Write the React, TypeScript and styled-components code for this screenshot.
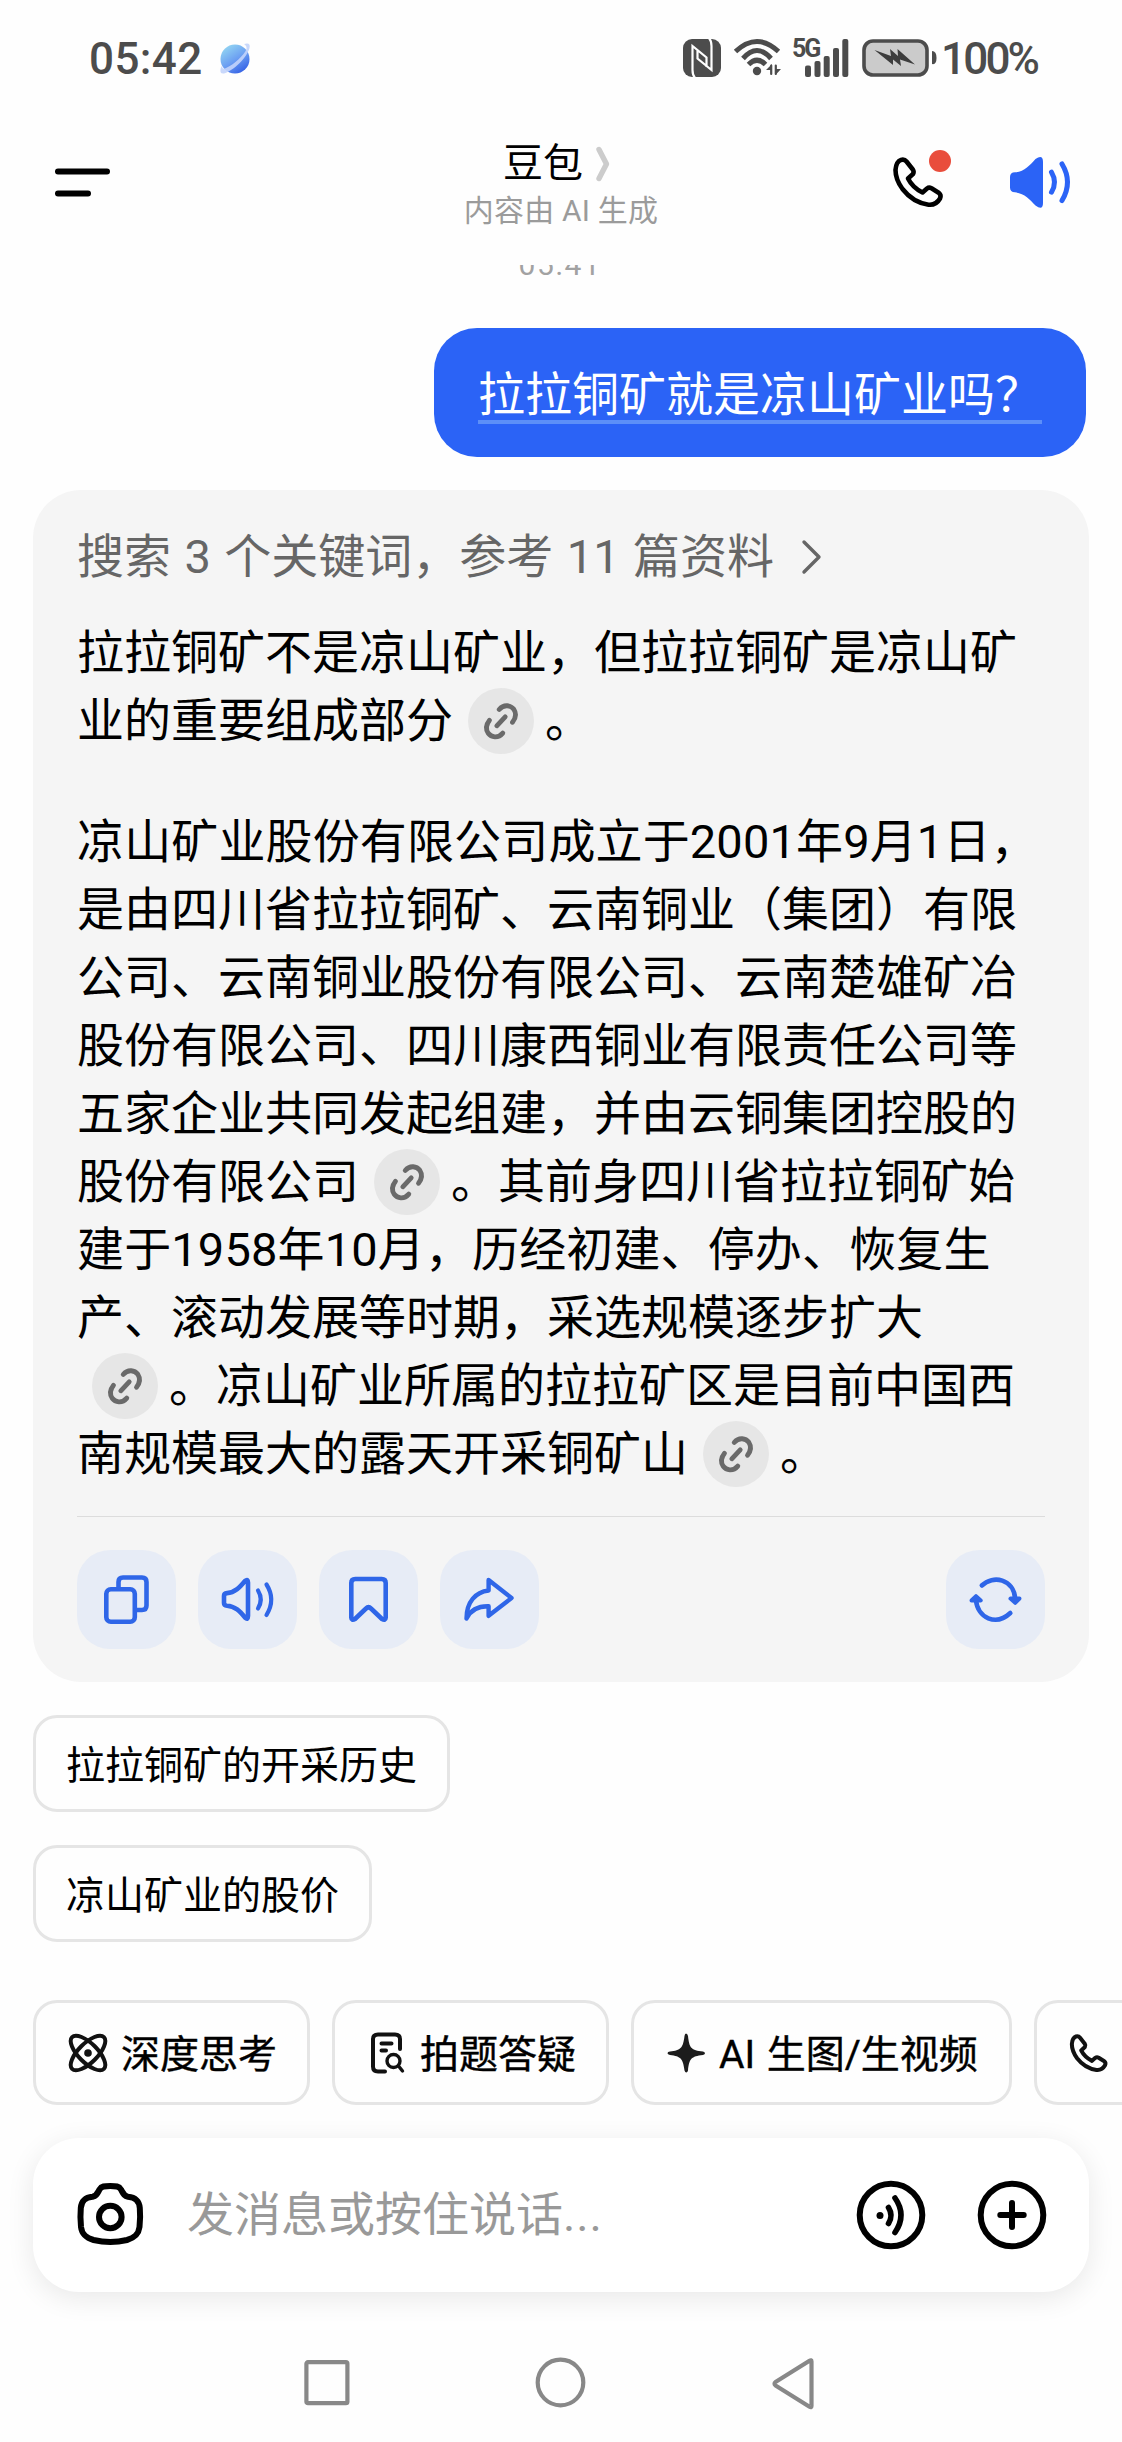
import React from "react";
import styled, { createGlobalStyle } from "styled-components";

const BLUE = "#2b63f6";
const ICON_BLUE = "#2f66e8";
const STATUS = "#4c4c4c";

const GlobalStyle = createGlobalStyle`
  * { box-sizing: border-box; }
  body {
    margin: 0;
    background: #fefefe;
    font-family: Roboto, "Noto Sans CJK SC", sans-serif;
    color: #000;
  }
  svg { display: block; overflow: visible; flex: none; }
`;

const Screen = styled.div`
  width: 1122px;
  height: 2442px;
  overflow: hidden;
  display: flex;
  flex-direction: column;
  background: #fefefe;
`;

const StatusBar = styled.header`
  height: 116px;
  padding: 0 84px 0 89px;
  display: flex;
  align-items: center;
  justify-content: space-between;
  color: ${STATUS};
`;

const StatusGroup = styled.div<{ $gap: number }>`
  display: flex;
  align-items: center;
  gap: ${(p) => p.$gap}px;
`;

const Clock = styled.span`
  padding-top: 1px;
  font-size: 44px;
  line-height: 52px;
  font-weight: 500;
  letter-spacing: 0.4px;
`;

const BatteryText = styled.span`
  display: block;
  width: 97px;
  padding-top: 1px;
  font-size: 44px;
  line-height: 52px;
  font-weight: 500;
  letter-spacing: -2.8px;
  white-space: nowrap;
  margin-left: 3px;
`;

const Signal = styled.div`
  display: grid;
  width: 57px;
  height: 38px;
  margin-left: -2px;
  > * { grid-area: 1 / 1; }
`;

const NetworkLabel = styled.span`
  font-size: 25px;
  line-height: 20px;
  font-weight: 700;
  letter-spacing: -2px;
`;

const TitleBar = styled.nav`
  height: 149px;
  padding: 0 52px 0 55px;
  display: grid;
  grid-template-columns: 1fr auto 1fr;
`;

const MenuSlot = styled.div`
  padding-top: 52px;
`;

const TitleColumn = styled.div`
  display: flex;
  flex-direction: column;
  align-items: center;
  padding: 22px 3px 0 0;
`;

const Title = styled.div`
  display: flex;
  align-items: center;
  gap: 13px;
  margin-right: 9px;
  font-size: 40px;
  line-height: 52px;
  font-weight: 400;
`;

const Subtitle = styled.div`
  font-size: 30px;
  line-height: 42px;
  letter-spacing: 0.2px;
  color: #9b9b9b;
  white-space: nowrap;
`;

const TitleActions = styled.div`
  display: flex;
  justify-content: flex-end;
  padding-top: 41px;
  gap: 58px;
`;

const Chat = styled.main`
  height: 1735px;
  overflow: hidden;
  padding: 0 33px;
  display: flex;
  flex-direction: column;
  align-items: flex-start;
`;

const TimeStamp = styled.div`
  align-self: center;
  margin: -19px 2px 0 0;
  height: 36px;
  font-size: 30px;
  line-height: 38px;
  letter-spacing: 1.7px;
  color: #a2a2a2;
`;

const Bubble = styled.div`
  align-self: flex-end;
  margin: 46px 3px 0 0;
  width: 652px;
  height: 129px;
  border-radius: 43px;
  background: ${BLUE};
  padding: 31px 44px 0;
`;

const BubbleText = styled.div`
  height: 65px;
  border-bottom: 4px solid #5c8ff8;
  color: #fff;
  font-size: 47px;
  line-height: 71px;
  white-space: nowrap;
`;

const Card = styled.section`
  width: 1056px;
  height: 1192px;
  margin-top: 33px;
  padding: 33px 44px;
  border-radius: 48px;
  background: #f5f5f5;
`;

const Line = styled.div`
  display: flex;
  align-items: center;
  height: 68px;
  font-size: 47px;
  line-height: 68px;
  white-space: pre;
`;

const SourceLine = styled(Line)`
  padding-bottom: 1px;
  color: #666;
  word-spacing: 1.8px;
  gap: 28px;
`;

const DatedLine = styled(Line)`
  letter-spacing: 0.14px;
`;

const Paragraph = styled.div<{ $top: number }>`
  margin-top: ${(p) => p.$top}px;
`;

const LinkBadge = styled.span`
  width: 66px;
  height: 66px;
  margin: 0 11px 0 15px;
  border-radius: 50%;
  background: #e6e6e6;
`;

const Divider = styled.hr`
  height: 1px;
  margin: 28px 0 33px;
  border: 0;
  background: #dcdcdc;
`;

const ActionRow = styled.div`
  display: flex;
  gap: 22px;
`;

const ActionButton = styled.button<{ $end?: boolean }>`
  width: 99px;
  height: 99px;
  padding: 0;
  border: 0;
  border-radius: 33px;
  background: #e7ecf6;
  margin-left: ${(p) => (p.$end ? "auto" : "0")};
`;

const Suggestion = styled.button`
  height: 97px;
  margin-top: 33px;
  padding: 0 30px 3px;
  border: 3px solid #e5e5e5;
  border-radius: 24px;
  background: #fefefe;
  font: inherit;
  font-size: 39px;
  color: #000;
  white-space: nowrap;
`;

const ToolRow = styled.div`
  height: 105px;
  padding-left: 33px;
  display: flex;
  gap: 22px;
`;

const Tool = styled.button<{ $width: number }>`
  flex: none;
  width: ${(p) => p.$width}px;
  height: 105px;
  padding: 0 0 0 30px;
  border: 3px solid #e5e5e5;
  border-radius: 24px;
  background: #fefefe;
  display: flex;
  align-items: center;
  gap: 11px;
  font: inherit;
  font-size: 39px;
  color: #000;
  white-space: nowrap;
`;

const ToolLabel = styled.span`
  padding-bottom: 4px;
  word-spacing: 2px;
  -webkit-text-stroke: 0.4px #000;
`;

const InputBar = styled.div`
  width: 1056px;
  height: 154px;
  margin: 33px 0 0 33px;
  padding: 0 43px 0 44px;
  border-radius: 46px;
  background: #fff;
  box-shadow: 0 6px 28px rgba(0, 0, 0, 0.09);
  display: flex;
  align-items: center;
`;

const Placeholder = styled.span`
  flex: 1;
  margin-left: 43px;
  font-size: 47px;
  line-height: 68px;
  color: #999;
`;

const Dots = styled.span`
  letter-spacing: 0.8px;
`;

const RoundIcons = styled.div`
  display: flex;
  gap: 53px;
`;

const NavBar = styled.footer`
  height: 150px;
  padding: 65px 307px 0 304px;
  display: flex;
  justify-content: space-between;
`;

const Stroke = ({
  w,
  h,
  color,
  sw,
  vb,
  children,
}: {
  w: number;
  h: number;
  color: string;
  sw: number;
  vb?: string;
  children: React.ReactNode;
}) => (
  <svg
    width={w}
    height={h}
    viewBox={vb ?? `0 0 ${w} ${h}`}
    fill="none"
    stroke={color}
    strokeWidth={sw}
    strokeLinecap="round"
    strokeLinejoin="round"
  >
    {children}
  </svg>
);

const PlanetIcon = () => (
  <svg width="31" height="32" viewBox="0 0 31 32">
    <defs>
      <linearGradient id="planet" x1="0.2" y1="0.1" x2="0.8" y2="1">
        <stop offset="0" stopColor="#8fd0f2" />
        <stop offset="0.5" stopColor="#6a9df2" />
        <stop offset="1" stopColor="#2f5be4" />
      </linearGradient>
    </defs>
    <circle cx="15" cy="17" r="14.5" fill="url(#planet)" />
    <path
      d="M24 2 Q31 0 29.5 6 C27 16 13 29 4 31.500 Q-1 32 0.800 26 Q1 25 2 24 Q2 28 6 26 C15 22 24 13 26.500 7 Q27 4 24 2Z"
      fill="#c3d4fb"
      opacity="0.9"
    />
  </svg>
);

const NfcIcon = () => (
  <svg width="38" height="38" viewBox="0 0 38 38">
    <rect width="38" height="38" rx="9" fill={STATUS} />
    <path
      d="M12 39 Q9.500 36 9.500 31 V7 L23.500 18.500 V28 M26 -1 Q28.500 2 28.500 7 V31 L14.500 19.500 V11"
      fill="none"
      stroke="#fefefe"
      strokeWidth="2.2"
    />
  </svg>
);

const WifiIcon = () => (
  <Stroke w={47} h={38} color={STATUS} sw={5}>
    <g strokeLinecap="butt">
      <path d="M1.500 12.500 Q23 -7.500 44.500 12.500" />
      <path d="M9 19.500 Q23 3.500 37 19.500" />
      <path d="M14.500 25.500 Q23 17 31.500 25.500" />
    </g>
    <circle cx="23" cy="32" r="4.200" fill={STATUS} stroke="none" />
    <path d="M38 36 V25 L32 31 H38 M41.500 25 V36 L47 30 H41.500" fill={STATUS} stroke="none" />
    <path d="M37.200 26.500 V35 M41.800 26.500 V35" strokeWidth="2.2" />
  </Stroke>
);

const SignalBars = () => (
  <svg width="57" height="38" viewBox="0 0 57 38" fill={STATUS}>
    <rect x="13" y="26.500" width="6" height="11.500" rx="2" />
    <rect x="22.500" y="22" width="6" height="16" rx="2" />
    <rect x="31.700" y="17" width="6" height="21" rx="2" />
    <rect x="41" y="9" width="6" height="29" rx="2" />
    <rect x="50.300" y="0" width="6" height="38" rx="2" />
  </svg>
);

const BatteryIcon = () => (
  <svg width="76" height="38" viewBox="0 0 76 38">
    <rect x="2" y="2" width="63" height="34" rx="9" fill="#cbcbcb" stroke={STATUS} strokeWidth="3.6" />
    <path d="M70 12 Q74.500 12 74.500 19 T70 25 Z" fill={STATUS} />
    <path d="M12.500 11 L29 17 L28 10 L36 17 L35.500 10 L53 25.500 L38 20.500 L39 27 L31 20.500 L31 26 Z" fill="#3d3d3d" />
  </svg>
);

const PHONE_PATH =
  "M13.5 4.500 L19.800 12.500 Q21.300 14.800 20 17 L15 21.500 Q19.500 30.500 29.500 35.500 L34 31.500 Q36 30 38.500 31.300 L46 36 Q48.500 38 47 41.500 Q43 48.500 35.500 47.700 Q20 45.500 9.500 32 Q2.500 22.500 2.500 13 Q3.200 4.500 8 2.900 Q11.500 2 13.500 4.500Z";

const CallIcon = () => (
  <Stroke w={59} h={51} color="#000" sw={4.6}>
    <path d={PHONE_PATH} />
    <circle cx="47" cy="4" r="11" fill="#e94d3c" stroke="none" />
  </Stroke>
);

const SpeakerFilled = () => (
  <Stroke w={60} h={51} color={BLUE} sw={5}>
    <path
      d="M0 20 Q0 15.500 5 15.300 C14 15 20 8 25.500 2 Q33 -3 33 5 V46 Q33 54 25.500 48.500 C20 42.500 14 36 5 35.300 Q0 35 0 30.500Z"
      fill={BLUE}
      stroke="none"
    />
    <path d="M41.500 15.200 Q47.500 25.200 41.500 35.200 M52 7 Q63 25.200 52 43.500" />
  </Stroke>
);

const LinkIcon = () => (
  <Stroke w={66} h={66} color="#6a6a6a" sw={4.8}>
    <path d="M31.2 21.500 C36 15.800 42.800 17.300 45.800 21.300 C48.500 25.500 47.500 30.500 44.500 34.300" />
    <path d="M28.800 37.800 L37.200 28.800" />
    <path d="M34.800 45.100 C30 50.800 23.200 49.300 20.200 45.300 C17.500 41.100 18.500 36.100 21.500 32.300" />
  </Stroke>
);

const CopyIcon = () => (
  <Stroke w={99} h={99} color={ICON_BLUE} sw={4.6}>
    <rect x="29.300" y="39.200" width="28.500" height="32.500" rx="4.500" />
    <path d="M41.500 37 V32 Q41.500 27.500 46 27.500 H65 Q69.500 27.500 69.500 32 V55.500 Q69.500 60 65 60 H60" />
  </Stroke>
);

const SpeakerIcon = () => (
  <Stroke w={99} h={99} color={ICON_BLUE} sw={4.6}>
    <path d="M26 46 Q26 43.300 29 43.100 C37 42.800 42 37 47 31 Q50 28.300 50 32.500 V66 Q50 70.400 47 67.500 C42 61.500 37 56 29 55.700 Q26 55.500 26 53 Z" />
    <path d="M60 40.500 Q65.500 49.400 60 58.500 M68.500 34.500 Q78 49.400 68.500 65" strokeWidth="4.2" />
  </Stroke>
);

const BookmarkIcon = () => (
  <Stroke w={99} h={99} color={ICON_BLUE} sw={4.6}>
    <path d="M32.3 33 Q32.300 29 36.300 29 H62.700 Q66.700 29 66.700 33 V67.500 Q66.500 71 63 69 L52 58.500 Q49.500 56 47 58.500 L36 69 Q32.500 71 32.300 67.500 Z" />
  </Stroke>
);

const ShareIcon = () => (
  <Stroke w={99} h={99} color={ICON_BLUE} sw={4.4}>
    <path d="M48.6 30 L71.500 48 L48.600 65.800 V56.300 C38 56 30.500 60.500 26.500 68.500 C26.500 52 35.500 42 48.600 40.500 Z" />
  </Stroke>
);

const RefreshIcon = () => (
  <Stroke w={99} h={99} color={ICON_BLUE} sw={4.6}>
    <path d="M35.800 35.500 C47 24.500 68 29 69.200 49" />
    <path d="M30 50 C31.500 68 50 76.500 64.300 63" />
    <path d="M64.500 48.600 H73.500 L69.200 52.800 Z M25.500 50.500 L30 46.200 L34.700 50.500 Z" fill={ICON_BLUE} strokeWidth="4" />
  </Stroke>
);

const AtomIcon = () => (
  <Stroke w={44} h={44} color="#111" sw={4}>
    <ellipse cx="22" cy="22" rx="9.500" ry="22.500" transform="rotate(45 22 22)" />
    <ellipse cx="22" cy="22" rx="9.500" ry="22.500" transform="rotate(-45 22 22)" />
    <circle cx="22" cy="22" r="3.800" fill="#111" stroke="none" />
  </Stroke>
);

const PaperSearchIcon = () => (
  <Stroke w={44} h={44} color="#111" sw={4}>
    <path d="M20 40.500 H13 Q8 40.500 8 35.500 V8 Q8 3.500 13 3.500 H30 Q35 3.500 35 8 V18" />
    <path d="M16.500 12.500 H26.500 M16.500 19.500 H21" />
    <circle cx="28.500" cy="30" r="6.500" strokeWidth="3.400" />
    <path d="M33.500 35 L37.500 40" strokeWidth="3.400" />
  </Stroke>
);

const SparkIcon = () => (
  <svg width="44" height="44" viewBox="0 0 44 44" fill="#1c1c1c">
    <path d="M22 2.500 Q23.500 2.500 24 5 C25.300 17 27 19.300 39 20.500 Q41 21 41 22.200 T39 24 C27 25.500 25.300 27.500 24 39.500 Q23.500 41.500 22.300 41.500 T20.500 39.500 C19 27.500 17 25.500 6 24 Q3.500 23.500 3.500 22.200 T6 20.500 C17 19.300 19 17 20.500 5 Q20.800 2.500 22 2.500Z" />
  </svg>
);

const CameraIcon = () => (
  <Stroke w={67} h={66} color="#000" sw={6}>
    <path d="M33.300 4 C39 4 42 4.200 44 7.500 C46.500 12 47 14 51 14.800 C58 15.500 62 18 62.800 26 Q63.600 35 62.500 45 C61.500 53 57 56 50 58 Q33.300 62 16.600 58 C9.500 56 5 53 4 45 Q3 35 3.800 26 C4.600 18 8.500 15.500 15.500 14.800 C19.500 14 20 12 22.500 7.500 C24.500 4.200 27.500 4 33.300 4Z" />
    <circle cx="33.300" cy="35" r="11.300" />
  </Stroke>
);

const VoiceIcon = () => (
  <Stroke w={68} h={68} color="#000" sw={6}>
    <circle cx="34" cy="34" r="31.300" />
    <circle cx="23" cy="34.500" r="3.500" fill="#000" stroke="none" />
    <path d="M31.500 26.500 Q36.500 34.500 31.500 42.500 M38 17 Q50 34 38 51.500" strokeWidth="5.6" />
  </Stroke>
);

const PlusIcon = () => (
  <Stroke w={68} h={68} color="#000" sw={6}>
    <circle cx="34" cy="34" r="31.300" />
    <path d="M22.300 34 H45.700 M34 22 V46" />
  </Stroke>
);

const Link = () => (
  <LinkBadge>
    <LinkIcon />
  </LinkBadge>
);

export default function App() {
  return (
    <>
      <GlobalStyle />
      <Screen>
        <StatusBar>
          <StatusGroup $gap={17}>
            <Clock>05:42</Clock>
            <PlanetIcon />
          </StatusGroup>
          <StatusGroup $gap={13}>
            <NfcIcon />
            <WifiIcon />
            <Signal>
              <NetworkLabel>5G</NetworkLabel>
              <SignalBars />
            </Signal>
            <StatusGroup $gap={0}>
              <BatteryIcon />
              <BatteryText>100%</BatteryText>
            </StatusGroup>
          </StatusGroup>
        </StatusBar>

        <TitleBar>
          <MenuSlot>
            <Stroke w={55} h={30} color="#000" sw={6}>
              <path d="M3 3.500 H52 M3 25.500 H33" />
            </Stroke>
          </MenuSlot>
          <TitleColumn>
            <Title>
              豆包
              <Stroke w={14} h={36} color="#ccc" sw={5.4}>
                <path d="M3 3.500 L10.500 18 L3 32.500" />
              </Stroke>
            </Title>
            <Subtitle>内容由 AI 生成</Subtitle>
          </TitleColumn>
          <TitleActions>
            <CallIcon />
            <SpeakerFilled />
          </TitleActions>
        </TitleBar>

        <Chat>
          <TimeStamp>05:41</TimeStamp>
          <Bubble>
            <BubbleText>拉拉铜矿就是凉山矿业吗？</BubbleText>
          </Bubble>

          <Card>
            <SourceLine>
              搜索 3 个关键词，参考 11 篇资料
              <Stroke w={20} h={34} color="#666" sw={3.4}>
                <path d="M2 2 L17 17 L2 32" />
              </Stroke>
            </SourceLine>
            <Paragraph $top={28}>
              <Line>拉拉铜矿不是凉山矿业，但拉拉铜矿是凉山矿</Line>
              <Line>
                业的重要组成部分
                <Link />。
              </Line>
            </Paragraph>
            <Paragraph $top={53}>
              <DatedLine>凉山矿业股份有限公司成立于2001年9月1日，</DatedLine>
              <Line>是由四川省拉拉铜矿、云南铜业（集团）有限</Line>
              <Line>公司、云南铜业股份有限公司、云南楚雄矿冶</Line>
              <Line>股份有限公司、四川康西铜业有限责任公司等</Line>
              <Line>五家企业共同发起组建，并由云铜集团控股的</Line>
              <Line>
                股份有限公司
                <Link />。其前身四川省拉拉铜矿始
              </Line>
              <DatedLine>建于1958年10月，历经初建、停办、恢复生</DatedLine>
              <Line>产、滚动发展等时期，采选规模逐步扩大</Line>
              <Line>
                <Link />。凉山矿业所属的拉拉矿区是目前中国西
              </Line>
              <Line>
                南规模最大的露天开采铜矿山
                <Link />。
              </Line>
            </Paragraph>
            <Divider />
            <ActionRow>
              <ActionButton><CopyIcon /></ActionButton>
              <ActionButton><SpeakerIcon /></ActionButton>
              <ActionButton><BookmarkIcon /></ActionButton>
              <ActionButton><ShareIcon /></ActionButton>
              <ActionButton $end><RefreshIcon /></ActionButton>
            </ActionRow>
          </Card>

          <Suggestion>拉拉铜矿的开采历史</Suggestion>
          <Suggestion>凉山矿业的股价</Suggestion>
        </Chat>

        <ToolRow>
          <Tool $width={277}><AtomIcon /><ToolLabel>深度思考</ToolLabel></Tool>
          <Tool $width={277}><PaperSearchIcon /><ToolLabel>拍题答疑</ToolLabel></Tool>
          <Tool $width={381}><SparkIcon /><ToolLabel>AI 生图/生视频</ToolLabel></Tool>
          <Tool $width={277}>
            <Stroke w={44} h={44} color="#111" sw={5.4} vb="-4 -4.500 59 59">
              <path d={PHONE_PATH} />
            </Stroke>
          </Tool>
        </ToolRow>

        <InputBar>
          <CameraIcon />
          <Placeholder>发消息或按住说话<Dots>...</Dots></Placeholder>
          <RoundIcons>
            <VoiceIcon />
            <PlusIcon />
          </RoundIcons>
        </InputBar>

        <NavBar>
          <Stroke w={46} h={52} color="#888" sw={4.2}>
            <rect x="2.400" y="5.200" width="41" height="41" rx="1.500" />
          </Stroke>
          <Stroke w={52} h={52} color="#888" sw={4.2}>
            <circle cx="25.500" cy="25.500" r="22.800" />
          </Stroke>
          <Stroke w={44} h={52} color="#888" sw={4.2}>
            <path d="M40.500 4.500 Q40.500 2.500 38.500 3.800 L4.500 25 Q2.500 26.800 4.500 28.500 L38.500 49.700 Q40.500 51 40.500 49 Z" />
          </Stroke>
        </NavBar>
      </Screen>
    </>
  );
}
